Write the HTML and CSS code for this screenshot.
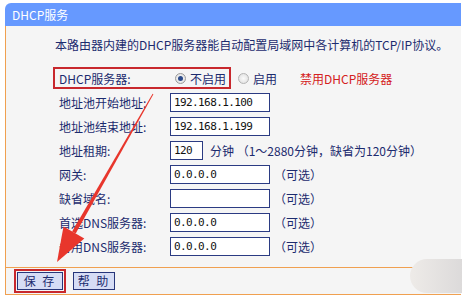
FILE: index.html
```html
<!DOCTYPE html>
<html lang="zh-CN">
<head>
    <meta charset="UTF-8">
    <title>DHCP服务</title>
    <link rel="stylesheet" href="styles.css">
</head>
<body>
    <div class="panel">
        <div class="panel-head">DHCP服务</div>

        <div class="panel-body">
            <p class="desc">本路由器内建的DHCP服务器能自动配置局域网中各计算机的TCP/IP协议。</p>

            <div class="row dhcp-row">
                <div class="dhcp-box">
                    <span class="label">DHCP服务器:</span>
                    <span class="radio checked"></span>
                    <span class="radio-text">不启用</span>
                </div>
                <span class="radio off"></span>
                <span class="radio-text">启用</span>
                <span class="hint">禁用DHCP服务器</span>
            </div>

            <div class="row">
                <span class="label">地址池开始地址:</span>
                <input class="field" type="text" value="192.168.1.100">
            </div>
            <div class="row">
                <span class="label">地址池结束地址:</span>
                <input class="field" type="text" value="192.168.1.199">
            </div>
            <div class="row">
                <span class="label">地址租期:</span>
                <input class="field short" type="text" value="120">
                <span class="unit">分钟 （1～2880分钟，缺省为120分钟）</span>
            </div>
            <div class="row">
                <span class="label">网关:</span>
                <input class="field" type="text" value="0.0.0.0">
                <span class="opt">（可选）</span>
            </div>
            <div class="row">
                <span class="label">缺省域名:</span>
                <input class="field" type="text" value="">
                <span class="opt">（可选）</span>
            </div>
            <div class="row">
                <span class="label">首选DNS服务器:</span>
                <input class="field" type="text" value="0.0.0.0">
                <span class="opt">（可选）</span>
            </div>
            <div class="row">
                <span class="label">备用DNS服务器:</span>
                <input class="field" type="text" value="0.0.0.0">
                <span class="opt">（可选）</span>
            </div>
        </div>

        <div class="panel-foot">
            <div class="save-box">
                <button class="btn btn-save">保&nbsp;存</button>
            </div>
            <button class="btn btn-help">帮&nbsp;助</button>
        </div>
    </div>

    <!-- watermark blob -->
    <div class="blob"></div>

    <!-- red arrow pointing at the save button -->
    <svg class="arrow" width="467" height="298" viewBox="0 0 467 298">
        <polygon points="153.4,94.2 152.6,93.8 72.1,231.5 75.7,233.5" fill="#e8362c"/>
        <polygon points="63.5,226.5 84.3,238.5 57,262" fill="#e8362c"/>
    </svg>
</body>
</html>
```

FILE: styles.css
```css
* {
    margin: 0;
    padding: 0;
    box-sizing: border-box;
}

body {
    background: #fff;
    font-family: "Noto Sans CJK SC", sans-serif;
    font-size: 12px;
    color: #1c2b6e;
    position: relative;
    width: 467px;
    height: 298px;
    overflow: hidden;
}

.panel {
    width: 456px;
    margin: 3px 0 0 5px;
}

.panel-head {
    height: 23px;
    line-height: 23px;
    background: #6699ff;
    color: #fff;
    padding-left: 7px;
    border-radius: 6px 0 0 0;
}

.panel-body {
    background: #f5f5f5;
    border-left: 1px solid #f0a050;
    padding: 11px 0 9px 49px;
}

.desc {
    line-height: 16px;
    margin-bottom: 13px;
}

.row {
    display: flex;
    align-items: center;
    height: 24px;
    padding-left: 4px;
    white-space: nowrap;
}

.label {
    width: 111px;
    flex-shrink: 0;
}

.dhcp-row {
    padding-left: 0;
    margin-left: -2px;
}

.dhcp-box {
    display: flex;
    align-items: center;
    width: 178px;
    height: 22px;
    border: 2px solid #c8282d;
    padding-left: 4px;
}

.radio {
    width: 11px;
    height: 11px;
    border-radius: 50%;
    border: 1px solid #9a9a9a;
    background: radial-gradient(circle, #fafafa 0, #dcdcdc 100%);
    position: relative;
    flex-shrink: 0;
}

.radio.checked {
    margin-left: 5px;
}

.radio.checked::after {
    content: "";
    position: absolute;
    left: 2px;
    top: 2px;
    width: 5px;
    height: 5px;
    border-radius: 50%;
    background: #2b4a8a;
}

.radio.off {
    margin-left: 7px;
    border-color: #b4b4b4;
}

.radio-text {
    margin-left: 4px;
}

.hint {
    margin-left: 23px;
    color: #d42020;
}

.field {
    width: 100px;
    height: 19px;
    border: 1px solid #2b3b83;
    background: #fff;
    padding-left: 3px;
    font-family: "DejaVu Sans Mono", monospace;
    font-size: 11px;
    letter-spacing: -0.6px;
    color: #111;
    outline: none;
}

.field.short {
    width: 33px;
}

.unit {
    margin-left: 7px;
}

.opt {
    margin-left: 4px;
}

.panel-foot {
    display: flex;
    align-items: flex-start;
    height: 28px;
    background: #f5f5f5;
    border-left: 1px solid #f0a050;
    border-top: 1px solid #f0a050;
    border-bottom: 1px solid #f0a050;
    padding: 1px 0 0 8px;
}

.save-box {
    border: 2px solid #c8282d;
    padding: 1px;
}

.btn {
    display: block;
    height: 18px;
    border: 1px solid #27367a;
    background: #d6ddf5;
    color: #1c2b6e;
    font-family: "Noto Sans CJK SC", sans-serif;
    font-size: 12px;
    line-height: 16px;
    letter-spacing: 2px;
}

.btn-save {
    width: 46px;
}

.btn-help {
    width: 42px;
    margin: 3px 0 0 7px;
}

.blob {
    position: absolute;
    left: 410px;
    top: 259px;
    width: 52px;
    height: 34px;
    border-radius: 17px 0 0 17px;
    background: linear-gradient(to right, #eeebe8, #dcdada);
}

.arrow {
    position: absolute;
    left: 0;
    top: 0;
    pointer-events: none;
}
```
